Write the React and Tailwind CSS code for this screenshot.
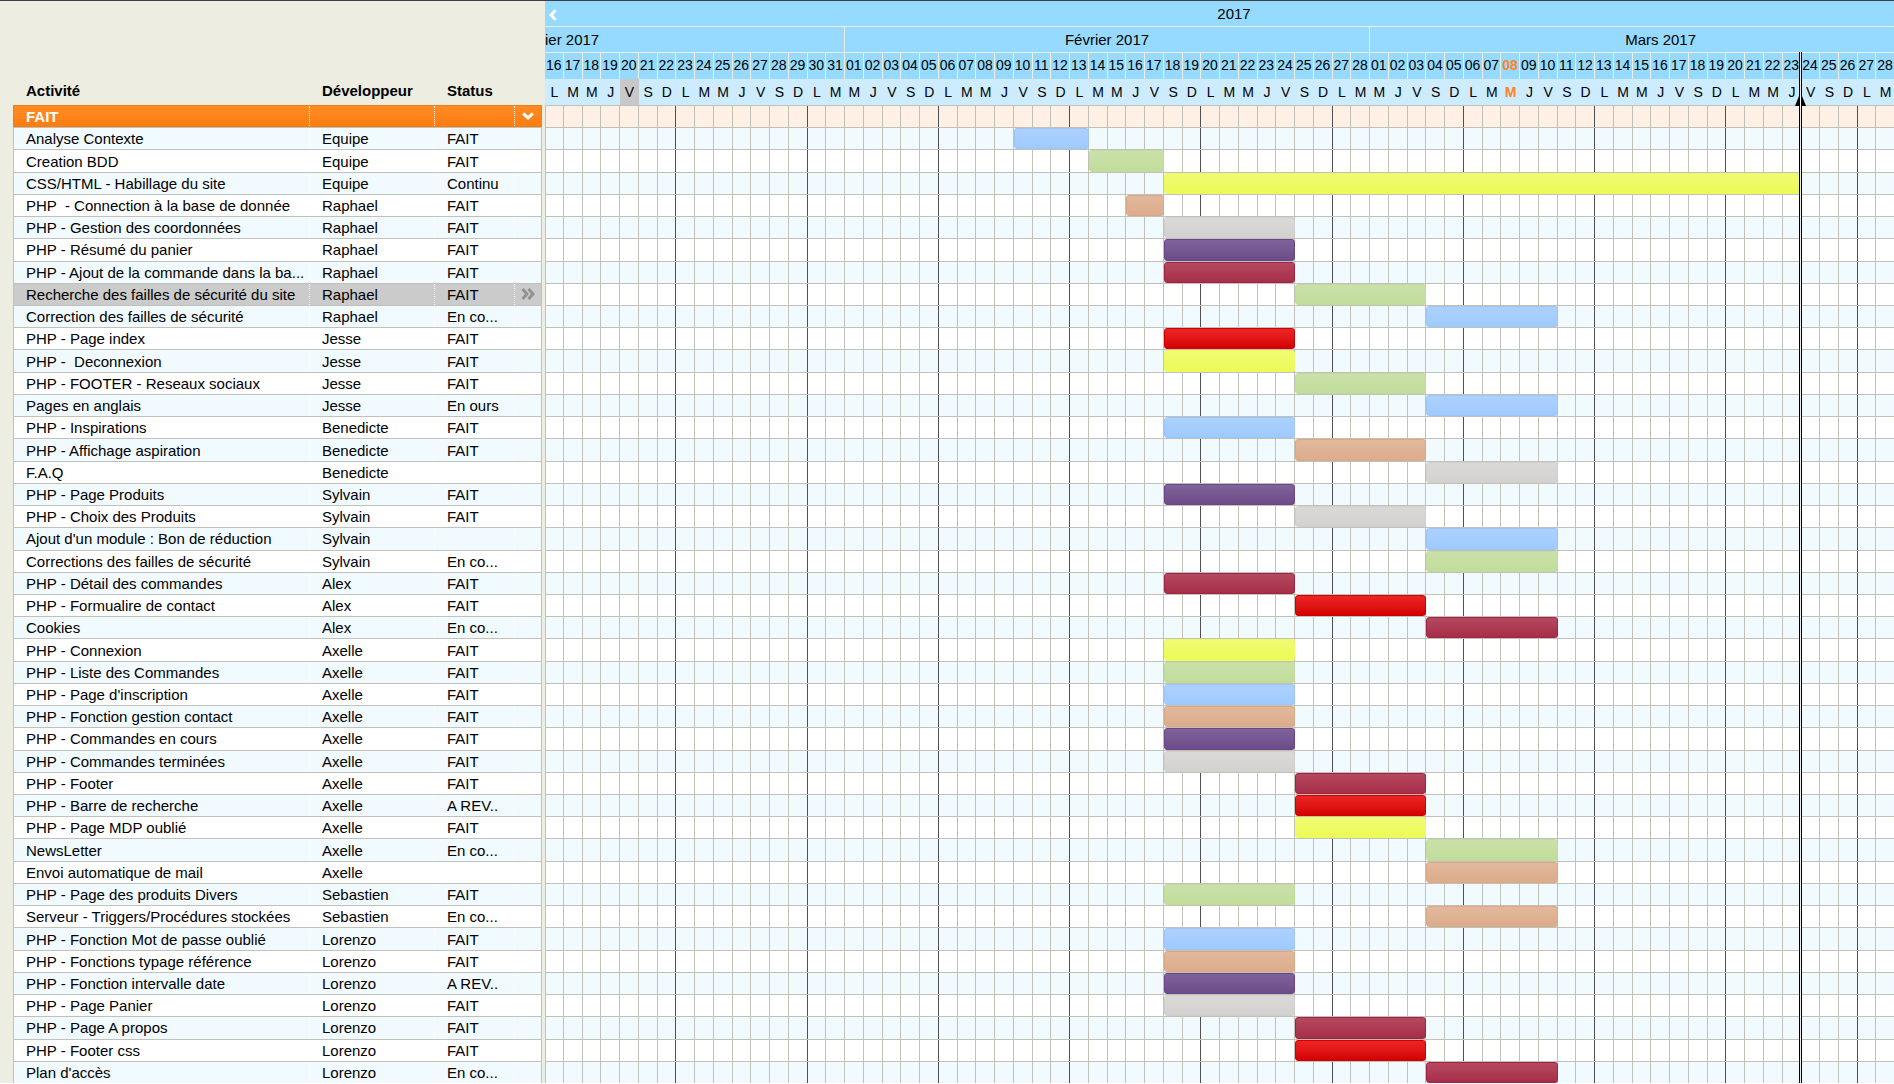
import React from "react";

const BARS = {
  blue: "border-[#9cc6fb] from-[#add1ff] to-[#9fcaff]",
  green: "border-[#c0db9b] from-[#cae1a9] to-[#c1dd9b]",
  yellow: "border-[#ecfb5e] from-[#f1fb72] to-[#ebfb55]",
  tan: "border-[#dba885] from-[#e2b89d] to-[#dcac8b]",
  gray: "border-[#d0cfcd] from-[#dad9d8] to-[#d3d2d1]",
  purple: "border-[#68468a] from-[#80639b] to-[#6c4c88]",
  wine: "border-[#a02441] from-[#b5485f] to-[#a62e48]",
  red: "border-[#cc0000] from-[#ee2424] to-[#d40000]",
};

// [activity, developer, status, colour, first day index, number of days]
const TASKS = [
  ["Analyse Contexte", "Equipe", "FAIT", "blue", 25, 4],
  ["Creation BDD", "Equipe", "FAIT", "green", 29, 4],
  ["CSS/HTML - Habillage du site", "Equipe", "Continu", "yellow", 33, 34],
  ["PHP  - Connection à la base de donnée", "Raphael", "FAIT", "tan", 31, 2],
  ["PHP - Gestion des coordonnées", "Raphael", "FAIT", "gray", 33, 7],
  ["PHP - Résumé du panier", "Raphael", "FAIT", "purple", 33, 7],
  ["PHP - Ajout de la commande dans la ba...", "Raphael", "FAIT", "wine", 33, 7],
  ["Recherche des failles de sécurité du site", "Raphael", "FAIT", "green", 40, 7],
  ["Correction des failles de sécurité", "Raphael", "En co...", "blue", 47, 7],
  ["PHP - Page index", "Jesse", "FAIT", "red", 33, 7],
  ["PHP -  Deconnexion", "Jesse", "FAIT", "yellow", 33, 7],
  ["PHP - FOOTER - Reseaux sociaux", "Jesse", "FAIT", "green", 40, 7],
  ["Pages en anglais", "Jesse", "En ours", "blue", 47, 7],
  ["PHP - Inspirations", "Benedicte", "FAIT", "blue", 33, 7],
  ["PHP - Affichage aspiration", "Benedicte", "FAIT", "tan", 40, 7],
  ["F.A.Q", "Benedicte", "", "gray", 47, 7],
  ["PHP - Page Produits", "Sylvain", "FAIT", "purple", 33, 7],
  ["PHP - Choix des Produits", "Sylvain", "FAIT", "gray", 40, 7],
  ["Ajout d'un module : Bon de réduction", "Sylvain", "", "blue", 47, 7],
  ["Corrections des failles de sécurité", "Sylvain", "En co...", "green", 47, 7],
  ["PHP - Détail des commandes", "Alex", "FAIT", "wine", 33, 7],
  ["PHP - Formualire de contact", "Alex", "FAIT", "red", 40, 7],
  ["Cookies", "Alex", "En co...", "wine", 47, 7],
  ["PHP - Connexion", "Axelle", "FAIT", "yellow", 33, 7],
  ["PHP - Liste des Commandes", "Axelle", "FAIT", "green", 33, 7],
  ["PHP - Page d'inscription", "Axelle", "FAIT", "blue", 33, 7],
  ["PHP - Fonction gestion contact", "Axelle", "FAIT", "tan", 33, 7],
  ["PHP - Commandes en cours", "Axelle", "FAIT", "purple", 33, 7],
  ["PHP - Commandes terminées", "Axelle", "FAIT", "gray", 33, 7],
  ["PHP - Footer", "Axelle", "FAIT", "wine", 40, 7],
  ["PHP - Barre de recherche", "Axelle", "A REV..", "red", 40, 7],
  ["PHP - Page MDP oublié", "Axelle", "FAIT", "yellow", 40, 7],
  ["NewsLetter", "Axelle", "En co...", "green", 47, 7],
  ["Envoi automatique de mail", "Axelle", "", "tan", 47, 7],
  ["PHP - Page des produits Divers", "Sebastien", "FAIT", "green", 33, 7],
  ["Serveur - Triggers/Procédures stockées", "Sebastien", "En co...", "tan", 47, 7],
  ["PHP - Fonction Mot de passe oublié", "Lorenzo", "FAIT", "blue", 33, 7],
  ["PHP - Fonctions typage référence", "Lorenzo", "FAIT", "tan", 33, 7],
  ["PHP - Fonction intervalle date", "Lorenzo", "A REV..", "purple", 33, 7],
  ["PHP - Page Panier", "Lorenzo", "FAIT", "gray", 33, 7],
  ["PHP - Page A propos", "Lorenzo", "FAIT", "wine", 40, 7],
  ["PHP - Footer css", "Lorenzo", "FAIT", "red", 40, 7],
  ["Plan d'accès", "Lorenzo", "En co...", "wine", 47, 7],
];

// Months with the days that the time line shows of each; `length` is the
// number of day columns over which the label is centred.
const MONTHS = [
  { label: "ier 2017", length: null, from: 16, to: 31 },
  { label: "Février 2017", length: 28, from: 1, to: 28 },
  { label: "Mars 2017", length: 31, from: 1, to: 28 },
];

const WEEK = ["L", "M", "M", "J", "V", "S", "D"];

const DAYS = MONTHS.flatMap((m) =>
  Array.from({ length: m.to - m.from + 1 }, (_, i) => String(m.from + i).padStart(2, "0"))
).map((number, i) => ({ number, letter: WEEK[i % 7] }));

const HOLIDAY = 4;
const TODAY = 51;
const DEADLINE = 67;

const DAY_GRID = "grid grid-cols-[repeat(72,minmax(0,1fr))]";
const LIST_GRID = "grid grid-cols-[296px_125px_80px_minmax(0,1fr)]";
const BODY_GRID = "grid flex-1 auto-rows-[minmax(22px,1fr)]";

function TaskRow({ task, index }) {
  const [activity, developer, status] = task;
  const selected = index === 7;
  const bg = selected ? "bg-[#cbcbcb]" : index % 2 ? "bg-white" : "bg-[#f1faff]";
  const cell = "flex items-center whitespace-pre border-r border-dotted border-white pl-3 pt-px";
  return (
    <div role="row" className={`${LIST_GRID} ${bg} min-h-0 overflow-hidden border-x border-t border-[#c2c1b8] leading-4`}>
      <span role="cell" className={cell}>{activity}</span>
      <span role="cell" className={cell}>{developer}</span>
      <span role="cell" className={cell}>{status}</span>
      <span role="cell" className="flex items-center justify-center">
        {selected && (
          <button type="button" aria-label="Détails">
            <svg viewBox="0 0 14 12" className="h-3 w-3.5" fill="none" stroke="#929292" strokeWidth="3">
              <path d="M1.500 1 6 6 1.500 11M7.500 1 12 6 7.500 11" />
            </svg>
          </button>
        )}
      </span>
    </div>
  );
}

function ActivityList() {
  return (
    <section role="table" aria-label="Activités" className="flex w-[545px] shrink-0 flex-col bg-[#eeede1] pl-[13px] pr-[3px]">
      <div role="row" className={`${LIST_GRID} h-[104px] items-end pb-1 pl-px font-bold leading-5`}>
        <span role="columnheader" className="pl-3">Activité</span>
        <span role="columnheader" className="pl-3">Développeur</span>
        <span role="columnheader" className="pl-3">Status</span>
      </div>
      <div className={BODY_GRID}>
        <div role="row" className={`${LIST_GRID} border border-[#f47c12] bg-linear-to-b from-[#ff8c24] to-[#ff7d10] leading-4 text-white`}>
          <span role="cell" className="flex items-center border-r border-dotted border-white pl-3 pt-0.5 font-bold">FAIT</span>
          <span role="cell" className="border-r border-dotted border-white" />
          <span role="cell" className="border-r border-dotted border-white" />
          <button type="button" aria-label="Replier le groupe" className="flex items-center justify-center">
            <svg viewBox="0 0 12 8" className="h-2 w-3" fill="none" stroke="currentColor" strokeWidth="3">
              <path d="M1.200 1.400 6 6 10.800 1.400" />
            </svg>
          </button>
        </div>
        {TASKS.map((task, i) => (
          <TaskRow key={i} task={task} index={i} />
        ))}
      </div>
    </section>
  );
}

function TimelineHeader() {
  return (
    <header className="bg-[#96dbff]">
      <div className="flex h-[26px] items-center border-b border-[#eeede1] pt-0.5">
        <button type="button" aria-label="Période précédente" className="flex w-7 items-center pl-1 text-white">
          <svg viewBox="0 0 8 12" className="h-3 w-2" fill="none" stroke="currentColor" strokeWidth="3">
            <path d="M6.600 1.200 2 6 6.600 10.800" />
          </svg>
        </button>
        <span className="flex-1 text-center">2017</span>
      </div>
      <div className={`${DAY_GRID} h-[26px] border-b border-[#eeede1]`}>
        {MONTHS.map((m, i) => {
          const shown = m.to - m.from + 1;
          return (
            <div
              key={m.label}
              className={`flex items-center pt-px ${i < 2 ? "border-r border-[#eeede1]" : "overflow-hidden"}`}
              style={{ gridColumn: `span ${shown}` }}
            >
              <span
                className="shrink-0 text-center"
                style={m.length ? { width: `${(m.length / shown) * 100}%` } : undefined}
              >
                {m.label}
              </span>
            </div>
          );
        })}
      </div>
      <div className={`${DAY_GRID} h-[26px]`}>
        {DAYS.map((d, i) => (
          <span
            key={i}
            className={`flex items-center justify-center border-r border-[#eeede1] pb-0.5 text-sm ${i === TODAY ? "font-bold text-[#ff8426]" : ""}`}
          >
            {d.number}
          </span>
        ))}
      </div>
      <div className={`${DAY_GRID} h-[26px] bg-[#cdecff]`}>
        {DAYS.map((d, i) => (
          <span
            key={i}
            className={`flex items-center justify-center text-sm ${i === HOLIDAY ? "bg-[#c8c8c8]" : ""} ${i === TODAY ? "font-bold text-[#ff8426]" : ""}`}
          >
            {d.letter}
          </span>
        ))}
      </div>
    </header>
  );
}

function TimelineRow({ tone, children }) {
  return (
    <div className={`${DAY_GRID} ${tone} min-h-0 grid-rows-1 border-t border-[#c2c1b8]`}>
      {DAYS.map((_, i) => (
        <span
          key={i}
          className={`row-start-1 border-r ${i === 0 ? "border-l" : ""} ${i % 7 === 6 ? "border-[#505050]" : "border-[#c2c1b8]"}`}
          style={{ gridColumn: i + 1 }}
        />
      ))}
      {children}
    </div>
  );
}

function Timeline() {
  return (
    <section aria-label="Planning" className="relative -mr-px flex min-w-0 flex-1 flex-col overflow-hidden">
      <TimelineHeader />
      <div className={BODY_GRID}>
        <TimelineRow tone="bg-[#fff0e6]" />
        {TASKS.map(([name, , , color, start, length], i) => (
          <TimelineRow key={i} tone={i % 2 ? "bg-white" : "bg-[#f1faff]"}>
            <div
              title={name}
              className={`row-start-1 z-10 rounded-[3px] border bg-linear-to-b ${BARS[color]}`}
              style={{ gridColumn: `${start + 1} / span ${length}` }}
            />
          </TimelineRow>
        ))}
      </div>
      <div
        className="absolute bottom-0 top-[51px] z-20 -ml-0.5 w-[3px] border-x border-black bg-[#eeeeec]"
        style={{ left: `${(DEADLINE / DAYS.length) * 100}%` }}
      >
        <svg viewBox="0 0 11 10" className="absolute -left-[5px] top-11 h-2.5 w-[11px]">
          <path d="M4 0h3l4 10H0z" fill="#000" />
          <path d="M5 0h1v10H5z" fill="#fff" />
        </svg>
      </div>
    </section>
  );
}

export default function App() {
  return (
    <main className="flex min-h-screen overflow-x-hidden border-t border-[#3b3f46] bg-white pb-px font-['Liberation_Sans',Arial,sans-serif] text-[15px] text-black">
      <ActivityList />
      <Timeline />
    </main>
  );
}
